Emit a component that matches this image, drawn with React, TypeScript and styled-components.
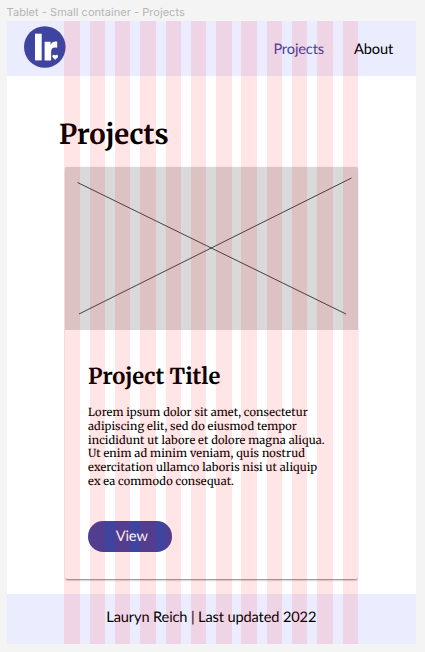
import React from "react";
import styled, { createGlobalStyle } from "styled-components";

const GlobalStyle = createGlobalStyle`
  * { box-sizing: border-box; }
  body { margin: 0; background: #f4f4f4; overflow: hidden; text-rendering: geometricPrecision; }
  h1, h2, p { margin: 0; }
`;

const serif = `Merriweather, "DejaVu Serif Condensed", "DejaVu Serif", serif`;

const Canvas = styled.div`
  width: 425px;
  height: 652px;
  padding: 0 9px 0 6.6px;
  background: #f4f4f4;
  color: #000;
  font-family: Lato, sans-serif;
`;

const FrameLabel = styled.div`
  height: 21px;
  padding-top: 5px;
  font: 11px/15px Inter, sans-serif;
  letter-spacing: 0.04px;
  color: #b5b5b5;
  white-space: nowrap;
`;

const Frame = styled.div`
  position: relative;
  display: flex;
  flex-direction: column;
  height: 623px;
  background: #fff;
`;

const Header = styled.header`
  display: flex;
  justify-content: space-between;
  align-items: flex-start;
  height: 54.5px;
  padding: 5px 23px 0 17.4px;
  background: #ececff;
`;

const Nav = styled.nav`
  display: flex;
  gap: 30px;
  padding-top: 15px;
`;

const NavLink = styled.a<{ $active?: boolean }>`
  font-size: 14.6px;
  letter-spacing: -0.13px;
  line-height: 18px;
  color: ${(p) => (p.$active ? "#3f459f" : "#000")};
`;

const Main = styled.main`
  flex: 1;
  padding: 40px 58px 0 58.4px;
`;

const PageTitle = styled.h1`
  height: 51.5px;
  margin-left: -6px;
  font: bold 27.4px/38px ${serif};
  white-space: nowrap;
`;

const Card = styled.article`
  width: 293px;
  height: 411.5px;
  border-radius: 2px;
  background: #fff;
  box-shadow: 0 2px 2px -1px rgba(0, 0, 0, 0.5), 0 0 1px rgba(0, 0, 0, 0.25);
`;

const Placeholder = styled.svg`
  display: block;
  width: 293px;
  height: 163px;
  border-radius: 2px 2px 0 0;
  background: #d9d9d9;
`;

const CardBody = styled.div`
  padding: 30px 0 0 23px;
`;

const CardTitle = styled.h2`
  height: 47px;
  font: bold 21.9px/32px ${serif};
  white-space: nowrap;
`;

const Copy = styled.p`
  height: 114px;
  font: 11.1px/13.75px ${serif};
  letter-spacing: 0.12px;
`;

const Line = styled.span`
  display: block;
  white-space: nowrap;
`;

const Button = styled.button`
  display: block;
  width: 84.5px;
  height: 30.5px;
  padding: 1px 0 0 3px;
  border: 0;
  border-radius: 15.25px;
  background: #3f459f;
  color: #fff;
  font: 14.6px/30px Lato, sans-serif;
  letter-spacing: -0.1px;
  text-rendering: geometricPrecision;
`;

const Footer = styled.footer`
  height: 50px;
  padding-top: 15px;
  background: #ececff;
  font-size: 14.6px;
  letter-spacing: -0.13px;
  line-height: 18px;
  text-align: center;
`;

const ColumnGuides = styled.div`
  position: absolute;
  inset: 0 auto 0 57.4px;
  display: grid;
  grid-template-columns: 16px 15px 15px 16px 15px 15px 16px 16px 15px 15px 16px 15px;
  column-gap: 10px;
  pointer-events: none;
`;

const Guide = styled.i<{ $shift: boolean }>`
  margin-left: ${(p) => (p.$shift ? -1 : 0)}px;
  margin-right: ${(p) => (p.$shift ? 1 : 0)}px;
  background: rgba(255, 0, 0, 0.1);
`;

const Logo = () => (
  <svg width="42" height="42" viewBox="0 0 42 42">
    <circle cx="20.8" cy="21" r="20.8" fill="#3f459f" />
    <rect x="11" y="7.7" width="6.7" height="26.7" fill="#fff" />
    <path
      d="M20.6 15.7h6v3.4c1.1-2.7 3.2-3.8 6.6-3.4v6.1c-4.2-.7-6.1.6-6.1 4.2v8.4h-6.5z"
      fill="#fff"
    />
    <path
      d="M31.2 33.7l-2.4-2.3c-1.5-1.7.9-3.6 2.4-1.9 1.5-1.7 3.9.2 2.4 1.9z"
      fill="#fff"
    />
  </svg>
);

const copy = [
  "Lorem ipsum dolor sit amet, consectetur",
  "adipiscing elit, sed do eiusmod tempor",
  "incididunt ut labore et dolore magna aliqua.",
  "Ut enim ad minim veniam, quis nostrud",
  "exercitation ullamco laboris nisi ut aliquip",
  "ex ea commodo consequat.",
];

export default function App() {
  return (
    <Canvas>
      <GlobalStyle />
      <FrameLabel>Tablet - Small container - Projects</FrameLabel>
      <Frame>
        <Header>
          <Logo />
          <Nav>
            <NavLink $active>Projects</NavLink>
            <NavLink>About</NavLink>
          </Nav>
        </Header>
        <Main>
          <PageTitle>Projects</PageTitle>
          <Card>
            <Placeholder viewBox="0 0 293 163">
              <path
                d="M12.5 15.5L281 147M14 147L286.5 11"
                stroke="#000"
                strokeWidth="0.7"
              />
            </Placeholder>
            <CardBody>
              <CardTitle>Project Title</CardTitle>
              <Copy>
                {copy.map((text) => (
                  <Line key={text}>{text}</Line>
                ))}
              </Copy>
              <Button>View</Button>
            </CardBody>
          </Card>
        </Main>
        <Footer>Lauryn Reich | Last updated 2022</Footer>
        <ColumnGuides>
          {Array.from({ length: 12 }, (_, i) => (
            <Guide key={i} $shift={i > 6} />
          ))}
        </ColumnGuides>
      </Frame>
    </Canvas>
  );
}
